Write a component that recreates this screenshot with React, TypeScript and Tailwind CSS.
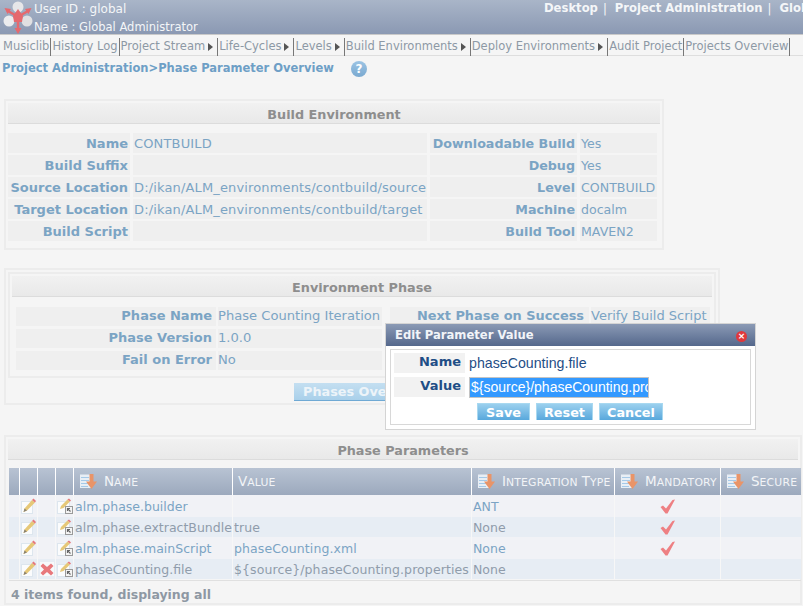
const font = "[font-family:'DejaVu_Sans',Verdana,sans-serif]"

function Logo() {
  return (
    <svg width="32" height="33" viewBox="0 0 32 33">
      <circle cx="16" cy="6" r="5.5" fill="#e6e6e8" />
      <circle cx="7" cy="20" r="5.5" fill="#ececee" />
      <circle cx="25" cy="20" r="5.5" fill="#e0e0e2" />
      <path d="M16 8 21 15 20 21 12 21 11 15Z" fill="#e5696e" />
      <path d="M13 14 5 9.5M19 14 27 9.5M16 18V30" stroke="#e5696e" strokeWidth="2.5" />
      <path d="M2.5 7 9 8 5.5 13ZM29.5 7 23 8 26.5 13ZM12.5 27H19.5L16 33Z" fill="#e5696e" />
    </svg>
  )
}

function Arrow() {
  return <span className="mx-[3px] inline-block h-0 w-0 border-y-[4px] border-l-[5px] border-y-transparent border-l-[#555]" />
}

function HelpIcon() {
  return (
    <span className="flex h-[16px] w-[16px] items-center justify-center rounded-full bg-gradient-to-b from-[#9cc4e4] to-[#7aa9d0] text-[12px] font-bold leading-none text-white">
      ?
    </span>
  )
}

function Pencil() {
  return (
    <svg width="15" height="16" viewBox="0 0 15 16">
      <rect x="0.5" y="3.5" width="11" height="12" fill="#fbfcfd" stroke="#dde6ee" />
      <path d="M2.5 14 3.5 10.5 11 2 14 4.5 6 12.5Z" fill="#e6c878" />
      <path d="M11 2 12.5 0.5 15 3 14 4.5Z" fill="#e5787c" />
      <path d="M2.5 14 3.5 10.5 6 12.5Z" fill="#8a8272" />
    </svg>
  )
}

function PencilLink() {
  return (
    <svg width="16" height="16" viewBox="0 0 16 16">
      <rect x="0.5" y="3.5" width="12" height="12" fill="#fbfcfd" stroke="#dde6ee" />
      <path d="M3 11 4 8 10.5 1.5 13 3.5 6.5 10Z" fill="#e6c878" />
      <path d="M10.5 1.5 12 0.5 14 2.5 13 3.5Z" fill="#e5787c" />
      <rect x="8.5" y="8.5" width="7" height="7" fill="#f4f4f4" stroke="#9a9a9a" />
      <path d="M13.5 13.5 10.8 10.8M10.5 13V10.5H13" stroke="#666" strokeWidth="1.2" fill="none" />
    </svg>
  )
}

function Cross() {
  return (
    <span className="flex h-[14px] w-[14px] items-center bg-[#f7f9fb]">
      <svg width="14" height="13" viewBox="0 0 14 13">
        <path d="M3 0.5 7 4 11 0.5 13.5 3 10 6.5 13.5 10 11 12.5 7 9 3 12.5 0.5 10 4 6.5 0.5 3Z" fill="#e8787c" />
      </svg>
    </span>
  )
}

function Check() {
  return (
    <svg width="15" height="15" viewBox="0 0 15 15">
      <path d="M0.5 8 3 6.5 6 9.5 12.5 1 15 0.5 7.5 14.5 5.5 14.5Z" fill="#ee8083" />
    </svg>
  )
}

function SortIcon() {
  return (
    <svg width="17" height="15" viewBox="0 0 17 15">
      <rect x="0" y="0.5" width="12" height="13.5" fill="#e8eef5" />
      <path d="M1 3.5H9M1 6.5H9M1 9.5H8M1 12.5H8" stroke="#a5c9e8" strokeWidth="1.2" />
      <path d="M9.5 0H13.5V7.5H17L11.5 15 6 7.5H9.5Z" fill="#e99468" />
    </svg>
  )
}

function PanelHeader({ title }: { title: string }) {
  return (
    <div className="flex h-[21px] items-center justify-center border-b border-[#dcdcdc] bg-gradient-to-b from-[#f1f1f1] to-[#e9e9e9] pt-[4px] text-[12.8px] font-bold text-[#8e8e8e]">
      {title}
    </div>
  )
}

const buildRows = [
  ["Name", "CONTBUILD", "Downloadable Build", "Yes"],
  ["Build Suffix", "", "Debug", "Yes"],
  ["Source Location", "D:/ikan/ALM_environments/contbuild/source", "Level", "CONTBUILD"],
  ["Target Location", "D:/ikan/ALM_environments/contbuild/target", "Machine", "docalm"],
  ["Build Script", "", "Build Tool", "MAVEN2"],
]

const phaseRows = [
  ["Phase Name", "Phase Counting Iteration", "Next Phase on Success", "Verify Build Script"],
  ["Phase Version", "1.0.0", "", ""],
  ["Fail on Error", "No", "", ""],
]

const params = [
  { name: "alm.phase.builder", value: "", type: "ANT", mandatory: true, del: false, h: "h-[22px]" },
  { name: "alm.phase.extractBundle", value: "true", type: "None", mandatory: true, del: false, h: "h-[20px]" },
  { name: "alm.phase.mainScript", value: "phaseCounting.xml", type: "None", mandatory: true, del: false, h: "h-[22px]" },
  { name: "phaseCounting.file", value: "${source}/phaseCounting.properties", type: "None", mandatory: false, del: true, h: "h-[20px]" },
]

const nav = [
  ["Musiclib", false],
  ["History Log", false],
  ["Project Stream", true],
  ["Life-Cycles", true],
  ["Levels", true],
  ["Build Environments", true],
  ["Deploy Environments", true],
  ["Audit Project", false],
  ["Projects Overview", false],
] as const

function SmallCaps({ label }: { label: string }) {
  return (
    <span className="whitespace-nowrap text-[#f2f4f7]">
      {label.split(" ").map((word, i) => (
        <span key={word}>
          {i > 0 && " "}
          <span className="text-[13.5px]">{word[0]}</span>
          <span className="text-[10.8px] uppercase tracking-[0.2px]">{word.slice(1)}</span>
        </span>
      ))}
    </span>
  )
}

function HeaderCol({ label, width }: { label: string; width: string }) {
  return (
    <div className={`flex h-full shrink-0 items-center border-r border-white pl-[5px] ${width}`}>
      <SmallCaps label={label} />
    </div>
  )
}

function SortCol({ label, width }: { label: string; width: string }) {
  return (
    <div className={`flex h-full shrink-0 items-center gap-[7px] border-r border-white pl-[6px] ${width}`}>
      <SortIcon />
      <SmallCaps label={label} />
    </div>
  )
}

const modalBtn =
  "h-[17px] border-x border-t border-[#a8d8f0] border-b-[#3c8ec8] bg-gradient-to-b from-[#9ad0ee] to-[#58a8dc] text-[12.8px] font-bold leading-[15px] text-white"

export default function App() {
  return (
    <div className={`relative h-[606px] w-[803px] overflow-hidden bg-[#f5f5f5] ${font}`}>
      {/* top bar */}
      <div className="flex h-[34px] items-start justify-between overflow-hidden bg-gradient-to-b from-[#a9b5c8] to-[#8b99b3]">
        <div className="flex">
          <div className="mt-[1px] ml-[2px] shrink-0">
            <Logo />
          </div>
          <div className="pt-[1px] text-[#f4f6f8]">
            <div className="text-[12px] leading-[16px]">User ID : global</div>
            <div className="mt-[1px] text-[11.5px] leading-[18px]">Name : Global Administrator</div>
          </div>
        </div>
        <div className="flex w-[259px] shrink-0 whitespace-nowrap text-[11.6px] font-bold leading-[16px] text-[#f4f6f8]">
          Desktop <span className="ml-[5px] mr-[8px] font-normal">|</span> Project Administration
          <span className="ml-[5px] mr-[8px] font-normal">|</span> Global
        </div>
      </div>

      {/* menu */}
      <div className="flex h-[22px] items-center border-y border-[#dedede] border-t-[#c9c9c9] bg-[#f5f5f5] pl-[2px] pt-[3px] text-[11.5px] text-[#8d99a5]">
        {nav.map(([label, arrow]) => (
          <div key={label} className="flex h-[18px] items-center whitespace-nowrap border-r border-[#777] pr-[1px] pl-[1px]">
            {label}
            {arrow && <Arrow />}
          </div>
        ))}
      </div>

      {/* breadcrumb */}
      <div className="mt-[4px] flex h-[17px] items-center pl-[2px] text-[11.5px] font-bold text-[#6e9fc6]">
        Project Administration&gt;Phase Parameter Overview
        <span className="ml-[17px]">
          <HelpIcon />
        </span>
      </div>

      {/* build environment */}
      <div className="mt-[22px] ml-[4px] w-[660px] border-2 border-[#ececec] p-[2px] pb-[7px]">
        <PanelHeader title="Build Environment" />
        <div className="mt-[9px] flex flex-col gap-[2px]">
          {buildRows.map((r) => (
            <div key={r[0]} className="flex h-[20px] gap-[3px] text-[13px] leading-[21px] text-[#7ba4c4]">
              <div className="w-[122px] shrink-0 bg-[#efefef] pr-[2px] text-right font-bold">{r[0]}</div>
              <div className="w-[294px] shrink-0 overflow-hidden whitespace-nowrap bg-[#efefef] pl-[1px] tracking-[0.15px]">{r[1]}</div>
              <div className="w-[147px] shrink-0 whitespace-nowrap bg-[#efefef] pr-[2px] text-right text-[12.7px] font-bold">{r[2]}</div>
              <div className="w-[77px] shrink-0 overflow-hidden bg-[#efefef] pl-[1px] text-[12.6px]">{r[3]}</div>
            </div>
          ))}
        </div>
      </div>

      {/* environment phase */}
      <div className="mt-[18px] ml-[4px] w-[716px] border-2 border-[#ececec] p-[2px]">
        <div className="border-2 border-[#ececec] p-[2px] pb-[6px]">
          <PanelHeader title="Environment Phase" />
          <div className="mt-[10px] flex flex-col gap-[3px]">
            {phaseRows.map((r) => (
              <div key={r[0]} className="flex h-[19px] gap-[2px] text-[13px] leading-[18px] text-[#7ba4c4]">
                <div className="ml-[4px] w-[200px] shrink-0 bg-[#efefef] pr-[4px] text-right font-bold">{r[0]}</div>
                <div className="w-[164px] shrink-0 whitespace-nowrap bg-[#efefef] text-[13.1px]">{r[1]}</div>
                <div className="ml-[6px] w-[199px] shrink-0 whitespace-nowrap bg-[#efefef] pr-[5px] text-right text-[12.9px] font-bold">{r[2]}</div>
                <div className="w-[119px] shrink-0 whitespace-nowrap bg-[#efefef] text-[13px]">{r[3]}</div>
              </div>
            ))}
          </div>
        </div>
        <div className="mt-[5px] flex justify-center">
          <button className="h-[18px] w-[136px] border-b border-[#6fa9d4] bg-gradient-to-b from-[#c4dff1] to-[#a9d0ea] pl-[5px] pt-[1px] text-[12.8px] font-bold leading-[16px] text-[#edf4f9]">
            Phases Overview
          </button>
        </div>
      </div>

      {/* phase parameters */}
      <div className="mt-[30px] ml-[4px] h-[170px] w-[798px] border-2 border-[#ececec] p-[2px]">
        <PanelHeader title="Phase Parameters" />
        <div className="mt-[8px] ml-[1px] w-[792px] text-[12.5px]">
          <div className="flex h-[27px] items-stretch bg-gradient-to-b from-[#b8c3d3] to-[#9ca9bd]">
            <HeaderCol label="" width="w-[11px]" />
            <HeaderCol label="" width="w-[18px]" />
            <HeaderCol label="" width="w-[18px]" />
            <HeaderCol label="" width="w-[18px]" />
            <SortCol label="Name" width="w-[159px]" />
            <HeaderCol label="Value" width="w-[239px]" />
            <SortCol label="Integration Type" width="w-[143px]" />
            <SortCol label="Mandatory" width="w-[106px]" />
            <SortCol label="Secure" width="w-[80px] border-r-0" />
          </div>
          {params.map((p, i) => (
            <div key={p.name} className={`flex ${p.h} items-stretch ${i % 2 ? "bg-[#e7edf4] text-[#8f9cab]" : "bg-[#f1f2f6] text-[#7ba4c4]"}`}>
              <div className="w-[11px] shrink-0 border-r border-[#f7f7f7]" />
              <div className="flex w-[18px] shrink-0 items-center justify-center border-r border-[#f7f7f7]">
                <Pencil />
              </div>
              <div className="flex w-[18px] shrink-0 items-center justify-center border-r border-[#f7f7f7]">
                {p.del && <Cross />}
              </div>
              <div className="flex w-[18px] shrink-0 items-center justify-center border-r border-[#f7f7f7]">
                <PencilLink />
              </div>
              <div className="flex w-[159px] shrink-0 items-center overflow-hidden whitespace-nowrap border-r border-[#f7f7f7] pl-[1px] pt-[2px]">{p.name}</div>
              <div className="flex w-[239px] shrink-0 items-center overflow-hidden whitespace-nowrap border-r border-[#f7f7f7] pl-[1px] pt-[2px] tracking-[0.1px]">{p.value}</div>
              <div className="flex w-[143px] shrink-0 items-center border-r border-[#f7f7f7] pl-[1px] pt-[2px]">{p.type}</div>
              <div className="flex w-[106px] shrink-0 items-center justify-center border-r border-[#f7f7f7]">
                {p.mandatory && <Check />}
              </div>
              <div className="w-[80px] shrink-0" />
            </div>
          ))}
          <div className="mt-[1px] h-[1px] bg-[#e0e0e0]" />
          <div className="mt-[5px] pl-[2px] text-[12.5px] font-bold text-[#8e98a3]">4 items found, displaying all</div>
        </div>
      </div>

      {/* modal */}
      <div className="absolute top-[323px] left-[385px] h-[107px] w-[371px] border border-[#d4d4d4] bg-white">
        <div className="flex h-[22px] items-center justify-between bg-gradient-to-b from-[#8b9ab5] to-[#55688c] pr-[8px] pl-[9px] pt-[2px] text-[11.6px] font-bold text-[#f2f4f8]">
          Edit Parameter Value
          <span className="flex h-[11px] w-[11px] items-center justify-center rounded-full bg-[#e0383c] text-[9px] leading-none text-white">×</span>
        </div>
        <div className="mx-[4px] mt-[3px] h-[76px] border border-[#d8d8d8] px-[3px] pt-[3px]">
          <div className="flex h-[20px] items-center">
            <div className="h-full w-[71px] bg-[#f2f2f2] pr-[4px] text-right text-[13px] font-bold leading-[17px] text-[#1f4e86]">Name</div>
            <div className="pl-[4px] font-['Liberation_Sans',sans-serif] text-[14.2px] leading-[18px] text-[#1f4e86]">phaseCounting.file</div>
          </div>
          <div className="mt-[4px] flex h-[20px] items-center">
            <div className="h-full w-[71px] bg-[#f2f2f2] pr-[4px] text-right text-[13px] font-bold leading-[17px] text-[#1f4e86]">Value</div>
            <div className="ml-[4px] h-[21px] w-[180px] overflow-hidden whitespace-nowrap border border-[#c4c4c4] bg-[#3399ff] pl-[1px] font-['Liberation_Sans',sans-serif] text-[14px] leading-[19px] text-white">
              ${"{source}"}/phaseCounting.properties
            </div>
          </div>
          <div className="mt-[6px] ml-[83px] flex gap-[6px]">
            <button className={`${modalBtn} w-[53px]`}>Save</button>
            <button className={`${modalBtn} w-[57px]`}>Reset</button>
            <button className={`${modalBtn} w-[64px]`}>Cancel</button>
          </div>
        </div>
      </div>
    </div>
  )
}
